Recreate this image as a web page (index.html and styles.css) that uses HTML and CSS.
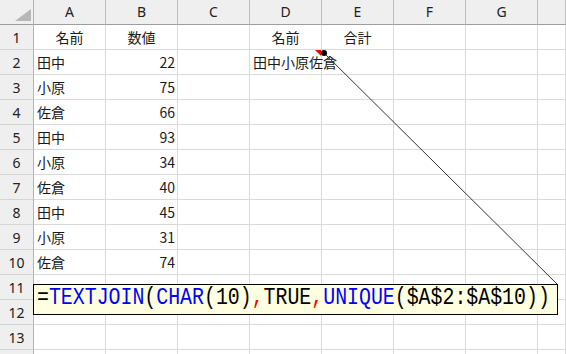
FILE: index.html
```html
<!DOCTYPE html>
<html lang="ja">
<head>
<meta charset="utf-8">
<link rel="stylesheet" href="styles.css">
</head>
<body>
<div class="page">
  <div class="sheet">
    <div class="corner"><span class="tri"></span></div>
    <div class="ch">A</div><div class="ch">B</div><div class="ch">C</div><div class="ch">D</div><div class="ch">E</div><div class="ch">F</div><div class="ch">G</div><div class="ch last"></div>

    <div class="rh">1</div><div class="c ctr">名前</div><div class="c ctr">数値</div><div class="c"></div><div class="c ctr">名前</div><div class="c ctr">合計</div><div class="c"></div><div class="c"></div><div class="c last"></div>
    <div class="rh">2</div><div class="c">田中</div><div class="c num">22</div><div class="c"></div><div class="c over note">田中小原佐倉</div><div class="c nob"></div><div class="c"></div><div class="c"></div><div class="c last"></div>
    <div class="rh">3</div><div class="c">小原</div><div class="c num">75</div><div class="c"></div><div class="c"></div><div class="c"></div><div class="c"></div><div class="c"></div><div class="c last"></div>
    <div class="rh">4</div><div class="c">佐倉</div><div class="c num">66</div><div class="c"></div><div class="c"></div><div class="c"></div><div class="c"></div><div class="c"></div><div class="c last"></div>
    <div class="rh">5</div><div class="c">田中</div><div class="c num">93</div><div class="c"></div><div class="c"></div><div class="c"></div><div class="c"></div><div class="c"></div><div class="c last"></div>
    <div class="rh">6</div><div class="c">小原</div><div class="c num">34</div><div class="c"></div><div class="c"></div><div class="c"></div><div class="c"></div><div class="c"></div><div class="c last"></div>
    <div class="rh">7</div><div class="c">佐倉</div><div class="c num">40</div><div class="c"></div><div class="c"></div><div class="c"></div><div class="c"></div><div class="c"></div><div class="c last"></div>
    <div class="rh">8</div><div class="c">田中</div><div class="c num">45</div><div class="c"></div><div class="c"></div><div class="c"></div><div class="c"></div><div class="c"></div><div class="c last"></div>
    <div class="rh">9</div><div class="c">小原</div><div class="c num">31</div><div class="c"></div><div class="c"></div><div class="c"></div><div class="c"></div><div class="c"></div><div class="c last"></div>
    <div class="rh">10</div><div class="c">佐倉</div><div class="c num">74</div><div class="c"></div><div class="c"></div><div class="c"></div><div class="c"></div><div class="c"></div><div class="c last"></div>
    <div class="rh">11</div><div class="c"></div><div class="c"></div><div class="c"></div><div class="c"></div><div class="c"></div><div class="c"></div><div class="c"></div><div class="c last"></div>
    <div class="rh">12</div><div class="c"></div><div class="c"></div><div class="c"></div><div class="c"></div><div class="c"></div><div class="c"></div><div class="c"></div><div class="c last"></div>
    <div class="rh">13</div><div class="c"></div><div class="c"></div><div class="c"></div><div class="c"></div><div class="c"></div><div class="c"></div><div class="c"></div><div class="c last"></div>
    <div class="rh"></div><div class="c"></div><div class="c"></div><div class="c"></div><div class="c"></div><div class="c"></div><div class="c"></div><div class="c"></div><div class="c last"></div>
  </div>

  <svg class="leader" width="566" height="354" viewBox="0 0 566 354">
    <line x1="557.5" y1="284.5" x2="324" y2="53" stroke="#333" stroke-width="1"/>
    <circle cx="324" cy="53" r="3" fill="#000"/>
  </svg>

  <div class="comment"><span class="formula"><span class="k">=</span><span class="fn">TEXTJOIN</span>(<span class="fn">CHAR</span>(10)<span class="sep">,</span>TRUE<span class="sep">,</span><span class="fn">UNIQUE</span>($A$2:$A$10))</span></div>
</div>
</body>
</html>
```

FILE: styles.css
```css
html, body {
  margin: 0;
  padding: 0;
  background: #fff;
  overflow: hidden;
}

.page {
  position: relative;
  width: 566px;
  height: 354px;
  overflow: hidden;
}

.sheet {
  display: grid;
  grid-template-columns: 34px repeat(7, 72px) 1fr;
  grid-auto-rows: 25px;
  font-family: "Noto Sans CJK JP", "Noto Sans", sans-serif;
  font-size: 14px;
  color: #1a1a1a;
}

.sheet > div {
  box-sizing: border-box;
  border-right: 1px solid #dadada;
  border-bottom: 1px solid #dadada;
  display: flex;
  align-items: center;
  white-space: nowrap;
  min-width: 0;
}

.corner {
  background: #efefef;
  position: relative;
  border-right: 1px solid #b4b4b4 !important;
  border-bottom: 1px solid #9e9e9e !important;
}

.tri {
  position: absolute;
  left: 15px;
  top: 9px;
  width: 0;
  height: 0;
  border-left: 16px solid transparent;
  border-bottom: 12px solid #b7b7b7;
}

.ch {
  background: #efefef;
  justify-content: center;
  border-right: 1px solid #bdbdbd !important;
  border-bottom: 1px solid #9e9e9e !important;
  font-family: "Noto Sans", sans-serif;
  font-size: 14px;
  color: #222;
  padding-bottom: 2px;
}

.rh {
  background: #efefef;
  justify-content: center;
  border-right: 1px solid #b4b4b4 !important;
  border-bottom: 1px solid #d4d4d4 !important;
  font-family: "Noto Sans", sans-serif;
  font-size: 14px;
  color: #222;
}

.c {
  padding: 0 3px;
  background: #fff;
}

.ctr {
  justify-content: center;
}

.num {
  justify-content: flex-end;
  padding-right: 2px;
}

.over {
  overflow: visible;
  position: relative;
  z-index: 1;
}

.note::after {
  content: "";
  position: absolute;
  right: 0;
  top: 0;
  width: 0;
  height: 0;
  border-left: 6px solid transparent;
  border-top: 6px solid #ff0000;
}

.nob {
  background: transparent !important;
}

.leader {
  position: absolute;
  left: 0;
  top: 0;
  z-index: 2;
  pointer-events: none;
}

.comment {
  position: absolute;
  left: 33px;
  top: 284px;
  width: 525px;
  height: 31px;
  box-sizing: border-box;
  background: #ffffe1;
  border: 1px solid #000;
  z-index: 3;
  display: flex;
  align-items: center;
  overflow: hidden;
}

.formula {
  display: inline-block;
  font-family: "Liberation Mono", monospace;
  font-size: 24px;
  line-height: 28px;
  color: #000;
  transform: scaleX(0.828);
  transform-origin: left center;
  margin-left: 3px;
  white-space: nowrap;
  margin-top: -3px;
}

.fn {
  color: #0000ff;
}

.sep {
  color: #ff0000;
}
```
